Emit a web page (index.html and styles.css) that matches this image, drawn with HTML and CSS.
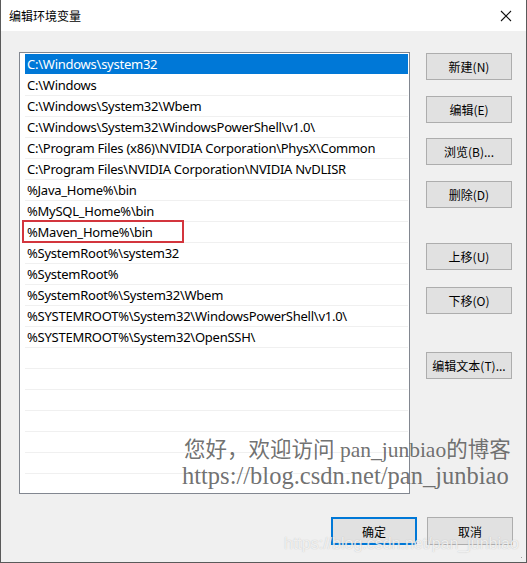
FILE: index.html
```html
<!DOCTYPE html>
<html lang="zh-CN">
<head>
<meta charset="utf-8">
<title>编辑环境变量</title>
<link rel="stylesheet" href="styles.css">
</head>
<body>
<div class="window">
  <div class="titlebar">
    <span class="title">编辑环境变量</span>
    <svg class="close" width="12" height="12" viewBox="0 0 12 12"><path d="M1 1 L11 11 M11 1 L1 11" stroke="#111" stroke-width="1.1" fill="none"/></svg>
  </div>
  <div class="content">
    <div class="main">
      <div class="list">
        <div class="row selected">C:\Windows\system32</div>
        <div class="row">C:\Windows</div>
        <div class="row">C:\Windows\System32\Wbem</div>
        <div class="row">C:\Windows\System32\WindowsPowerShell\v1.0\</div>
        <div class="row">C:\Program Files (x86)\NVIDIA Corporation\PhysX\Common</div>
        <div class="row">C:\Program Files\NVIDIA Corporation\NVIDIA NvDLISR</div>
        <div class="row">%Java_Home%\bin</div>
        <div class="row">%MySQL_Home%\bin</div>
        <div class="row marked">%Maven_Home%\bin<span class="mark"></span></div>
        <div class="row">%SystemRoot%\system32</div>
        <div class="row">%SystemRoot%</div>
        <div class="row">%SystemRoot%\System32\Wbem</div>
        <div class="row">%SYSTEMROOT%\System32\WindowsPowerShell\v1.0\</div>
        <div class="row">%SYSTEMROOT%\System32\OpenSSH\</div>
        <div class="row"></div>
        <div class="row"></div>
        <div class="row"></div>
        <div class="row"></div>
        <div class="row"></div>
        <div class="row"></div>
        <div class="row"></div>
      </div>
      <div class="side">
        <button class="btn">新建(N)</button>
        <button class="btn">编辑(E)</button>
        <button class="btn">浏览(B)...</button>
        <button class="btn">删除(D)</button>
        <button class="btn gap-lg">上移(U)</button>
        <button class="btn gap-md">下移(O)</button>
        <button class="btn gap-xl">编辑文本(T)...</button>
      </div>
    </div>
    <div class="footer">
      <button class="btn primary">确定</button>
      <button class="btn">取消</button>
    </div>
  </div>
  <div class="watermark">
    <div class="wm1">您好，欢迎访问 pan_junbiao的博客</div>
    <div class="wm2">https://blog.csdn.net/pan_junbiao</div>
  </div>
  <div class="faint">https://blog.csdn.net/pan_junbiao</div>
  <div class="grip"></div>
</div>
</body>
</html>
```

FILE: styles.css
```css
* { box-sizing: border-box; }
html, body { margin: 0; padding: 0; background: #f0f0f0; }
body {
  font-family: "Noto Sans", "Noto Sans CJK SC", sans-serif;
  color: #000;
}
.window {
  position: relative;
  width: 527px;
  height: 563px;
  border-left: 1px solid #5a5a5a;
  border-right: 1px solid #5a5a5a;
  border-bottom: 1px solid #5a5a5a;
  background: #f0f0f0;
  display: flex;
  flex-direction: column;
  overflow: hidden;
}
.titlebar {
  height: 31px;
  background: #fff;
  display: flex;
  align-items: center;
  justify-content: space-between;
  padding: 0 14px 0 8px;
  flex: none;
}
.title {
  font-family: "Noto Sans CJK SC", sans-serif;
  font-size: 12px;
  letter-spacing: 0;
}
.close { display: block; }
.content {
  flex: 1;
  display: flex;
  flex-direction: column;
  padding: 21px 13px 0 18px;
}
.main {
  display: flex;
  gap: 16px;
}
.list {
  width: 391px;
  height: 442px;
  background: #fff;
  border: 1px solid #828790;
  padding-top: 1px;
  padding-right: 1px;
  overflow: hidden;
}
.row {
  position: relative;
  height: 21px;
  margin-left: 5px;
  padding-left: 2px;
  border-bottom: 1px solid #f0f0f0;
  font-size: 13px;
  line-height: 20px;
  white-space: nowrap;
  letter-spacing: -0.25px;
}
.row.selected {
  background: #0078d7;
  color: #fff;
  border-bottom-color: #fff;
}
.mark {
  position: absolute;
  left: -3px;
  top: -2px;
  width: 162px;
  height: 23px;
  border: 2px solid #d3353d;
}
.side {
  display: flex;
  flex-direction: column;
  gap: 16px;
  padding-top: 1px;
}
.btn {
  width: 86px;
  height: 27px;
  padding: 0;
  margin: 0;
  background: #e1e1e1;
  border: 1px solid #adadad;
  font-family: "Noto Sans CJK SC", sans-serif;
  font-size: 12px;
  color: #000;
  line-height: 25px;
}
.side .btn:nth-child(3) { margin-top: -1px; }
.gap-lg { margin-top: 19px; }
.gap-md { margin-top: 1px; }
.gap-xl { margin-top: 22px; }
.footer {
  display: flex;
  justify-content: flex-end;
  gap: 10px;
  margin-top: 23px;
}
.footer .btn { height: 28px; }
.btn.primary {
  border: 2px solid #0078d7;
}
.watermark {
  position: absolute;
  left: 181px;
  top: 437px;
  font-family: "Liberation Serif", "Noto Sans CJK SC", serif;
  color: rgba(95, 95, 95, 0.9);
  white-space: nowrap;
}
.wm1 {
  font-size: 21.5px;
  line-height: 26px;
  padding-left: 2px;
}
.wm2 {
  font-size: 24.5px;
  line-height: 26px;
}
.faint {
  position: absolute;
  left: 283px;
  top: 535px;
  font-family: "Liberation Sans", sans-serif;
  font-size: 16px;
  color: rgba(255, 255, 255, 0.75);
  text-shadow: 0 0 1px rgba(150, 150, 150, 0.6);
  white-space: nowrap;
}
.grip {
  position: absolute;
  right: 2px;
  bottom: 2px;
  width: 7px;
  height: 7px;
  background-image: radial-gradient(circle, #a0a0a0 0.8px, transparent 1px);
  background-size: 3px 3px;
  clip-path: polygon(100% 0, 100% 100%, 0 100%);
}
```
